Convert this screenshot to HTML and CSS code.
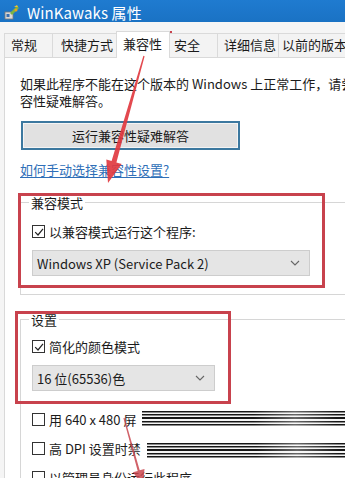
FILE: index.html
```html
<!DOCTYPE html>
<html lang="zh-CN">
<head>
<meta charset="utf-8">
<title>WinKawaks 属性</title>
<link rel="stylesheet" href="styles.css">
</head>
<body>
<div class="win">
  <div class="titlebar">
    <svg class="appicon" width="16" height="16" viewBox="0 0 16 16">
      <rect x="1" y="8" width="8" height="7" fill="#d8d8d8" stroke="#7a7a7a" stroke-width="0.8"/>
      <rect x="2.5" y="10" width="3" height="3" fill="#3a6fb0"/>
      <path d="M6 9 L13 2 L15 4 L8 11 Z" fill="#7cb342"/>
      <path d="M10 3 L13 1 L14 3 Z" fill="#f2c230"/>
      <circle cx="12" cy="6" r="1.5" fill="#e8a020"/>
    </svg>
    <span class="title">WinKawaks 属性</span>
  </div>
  <div class="client">
    <div class="tabs">
      <div class="tab t1">常规</div>
      <div class="tab t2">快捷方式</div>
      <div class="tab t3 active">兼容性</div>
      <div class="tab t4">安全</div>
      <div class="tab t5">详细信息</div>
      <div class="tab t6">以前的版本</div>
    </div>
    <div class="panel">
      <p class="intro">如果此程序不能在这个版本的 Windows 上正常工作，请尝试运行兼<br>容性疑难解答。</p>
      <div class="btn">运行兼容性疑难解答</div>
      <a class="link" href="#">如何手动选择兼容性设置?</a>
      <div class="group g1">
        <div class="legend">兼容模式</div>
        <div class="check"><span class="box checked"><svg width="10" height="10" viewBox="0 0 10 10"><path d="M1.2 5.2 L4 8 L9 1.8" fill="none" stroke="#222" stroke-width="1.2"/></svg></span>以兼容模式运行这个程序:</div>
        <div class="select s1"><span>Windows XP (Service Pack 2)</span><svg width="10" height="6" viewBox="0 0 10 6"><path d="M1 1 L5 5 L9 1" fill="none" stroke="#666" stroke-width="1.1"/></svg></div>
      </div>
      <div class="group g2">
        <div class="legend">设置</div>
        <div class="check"><span class="box checked"><svg width="10" height="10" viewBox="0 0 10 10"><path d="M1.2 5.2 L4 8 L9 1.8" fill="none" stroke="#222" stroke-width="1.2"/></svg></span>简化的颜色模式</div>
        <div class="select s2"><span>16 位(65536)色</span><svg width="10" height="6" viewBox="0 0 10 6"><path d="M1 1 L5 5 L9 1" fill="none" stroke="#666" stroke-width="1.1"/></svg></div>
        <div class="check plain r1"><span class="box"></span>用 640 x 480 屏<span class="hidden">幕分辨率运行</span></div>
        <div class="check plain"><span class="box"></span>高 DPI 设置时禁<span class="hidden">用显示缩放</span></div>
        <div class="check plain"><span class="box"></span>以管理员身份运行此程序</div>
      </div>
    </div>
  </div>

  <div class="hl hl-tab"></div>
  <div class="hl hl-g1"></div>
  <div class="hl hl-g2"></div>
  <div class="smear sm1"></div>
  <div class="smear sm2"></div>
  <svg class="arrows" width="345" height="478" viewBox="0 0 345 478">
    <polygon points="108,183 106.3,159.6 111.6,161.1 143.4,55.8 144.6,56.2 116.4,162.5 121.7,164" fill="#e13a40" opacity="0.92"/>
    <polygon points="143,486 132.9,472.2 137.7,470.9 123.4,418.2 124.6,417.8 139.7,470.3 144.5,469" fill="#c9464f" opacity="0.85"/>
  </svg>
</div>
</body>
</html>
```

FILE: styles.css
```css
html, body {
  margin: 0;
  padding: 0;
  overflow: hidden;
  background: #f3f3f3;
}
body {
  font-family: "Noto Sans CJK SC", "Noto Sans", sans-serif;
  font-size: 13px;
  color: #1b1b1b;
}
.win {
  position: relative;
  width: 420px;
  height: 478px;
  overflow: hidden;
}
.titlebar {
  height: 22px;
  background: linear-gradient(#1f7bd0, #1a72c4);
  display: flex;
  align-items: center;
  padding-left: 4px;
  gap: 7px;
  color: #fff;
}
.appicon { flex: none; margin-top: 2px; }
.title {
  font-size: 15px;
  line-height: 22px;
  padding-top: 3px;
  letter-spacing: 0.1px;
}
.client {
  padding: 10px 0 0 4px;
  background: #f5f5f5;
}
.tabs {
  display: flex;
  align-items: flex-end;
  height: 25px;
  position: relative;
  z-index: 1;
}
.tab {
  box-sizing: border-box;
  height: 24px;
  line-height: 22px;
  border: 1px solid #dadada;
  border-bottom: none;
  margin-right: -1px;
  background: #f3f3f3;
  white-space: nowrap;
  flex: none;
}
.t1 { width: 49px; padding-left: 6px; }
.t2 { width: 65px; padding-left: 8px; }
.t3 { width: 54px; padding-left: 6px; }
.t4 { width: 49px; padding-left: 4px; }
.t5 { width: 62px; padding-left: 6px; }
.t6 { width: 90px; padding-left: 3px; }
.tab.active {
  background: #fff;
  margin-bottom: -1px;
  height: 27px;
  line-height: 24px;
}
.panel {
  background: #fff;
  border: 1px solid #d9d9d9;
  border-right: none;
  padding: 18px 0 0 15px;
  height: 420px;
}
.intro {
  margin: 0;
  line-height: 16.5px;
  white-space: nowrap;
}
.btn {
  box-sizing: border-box;
  margin: 12px 0 0 1px;
  width: 219px;
  height: 29px;
  border: 2px solid #3c789f;
  background: #e1e1e1;
  box-shadow: inset 0 0 0 1px #f4f4f4;
  display: flex;
  align-items: center;
  justify-content: center;
  padding-bottom: 1px;
}
.link {
  display: block;
  margin-top: 11px;
  line-height: 17px;
  color: #2f6fb8;
  text-decoration: underline;
  text-underline-offset: 2px;
  width: max-content;
}
.group {
  position: relative;
  margin-top: 24px;
  border: 1px solid #d6d6d6;
  border-right: none;
  padding: 9px 0 18px 11px;
}
.legend {
  position: absolute;
  left: 8px;
  top: -9px;
  padding: 0 2px;
  line-height: 17px;
  background: #fff;
}
.g2 { margin-top: 24px; border-bottom: none; padding-top: 17px; }
.check {
  display: flex;
  align-items: center;
  line-height: 19px;
  white-space: nowrap;
}
.g1 .check { margin-top: 10px; }
.box {
  box-sizing: border-box;
  width: 13px;
  height: 13px;
  border: 1px solid #333;
  background: #fff;
  margin-right: 4px;
  display: flex;
  align-items: center;
  justify-content: center;
  flex: none;
}
.select {
  box-sizing: border-box;
  margin-top: 9px;
  height: 26px;
  background: #e5e5e5;
  border: 1px solid #cdcdcd;
  display: flex;
  align-items: center;
  justify-content: space-between;
  padding: 0 9px 0 4px;
}
.s1 { width: 278px; }
.s2 { width: 183px; }
.plain { margin-top: 10px; }
.plain.r1 { margin-top: 19px; }
.hidden { visibility: hidden; }

.hl {
  position: absolute;
  box-sizing: border-box;
  border: 3px solid #c8424d;
}
.hl-tab { left: 117px; top: 31px; width: 55px; height: 26px; border-width: 2.5px; }
.hl-g1 { left: 18px; top: 193px; width: 307px; height: 95px; }
.hl-g2 { left: 15px; top: 311px; width: 216px; height: 93px; }

.smear {
  position: absolute;
  right: 0;
  z-index: 2;
  background-color: #fff;
  background-image:
    linear-gradient(90deg, rgba(255,255,255,0) 0, rgba(255,255,255,0) 40%, rgba(255,255,255,0.35) 55%, rgba(255,255,255,0) 70%),
    repeating-linear-gradient(180deg, #161616 0 1.2px, #8a8a8a 1.2px 2px, #f4f4f4 2px 3.2px);
}
.sm1 { left: 142px; top: 411px; height: 15px; }
.sm2 { left: 147px; top: 443px; height: 15px; }

.arrows {
  position: absolute;
  left: 0;
  top: 0;
  z-index: 3;
  pointer-events: none;
}
```
